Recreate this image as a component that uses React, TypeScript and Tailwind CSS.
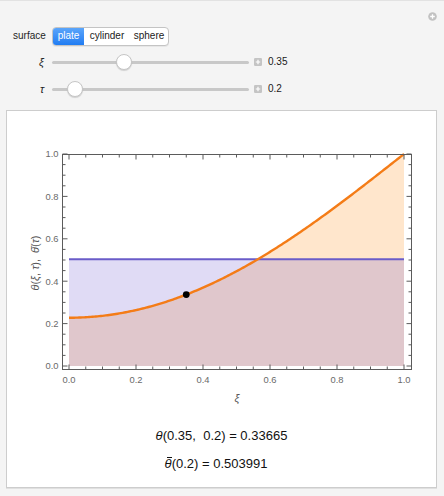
import React, { useMemo } from "react";

const X0 = 69;
const XS = 335;
const Y0 = 366;
const YS = 212;
const TAU = 0.2;
const XI = 0.35;

function theta(xi: number, tau: number) {
  let s = 0;
  for (let n = 0; n < 40; n++) {
    const l = (n + 0.5) * Math.PI;
    s += ((2 * (n % 2 ? -1 : 1)) / l) * Math.cos(l * xi) * Math.exp(-l * l * tau);
  }
  return 1 - s;
}
function meanTheta(tau: number) {
  let s = 0;
  for (let n = 0; n < 40; n++) {
    const l = (n + 0.5) * Math.PI;
    s += (2 / (l * l)) * Math.exp(-l * l * tau);
  }
  return 1 - s;
}
const px = (v: number) => X0 + v * XS;
const py = (v: number) => Y0 - v * YS;

function Plot() {
  const { curve, fillCurve, mean } = useMemo(() => {
    const pts: string[] = [];
    for (let i = 0; i <= 200; i++) {
      const xi = i / 200;
      pts.push(`${px(xi).toFixed(2)},${py(theta(xi, TAU)).toFixed(2)}`);
    }
    const m = meanTheta(TAU);
    return {
      curve: "M" + pts.join(" L"),
      fillCurve: "M" + px(0) + "," + Y0 + " L" + pts.join(" L") + " L" + px(1) + "," + Y0 + " Z",
      mean: m,
    };
  }, []);

  const ticks: { v: number; major: boolean }[] = [];
  for (let i = 0; i <= 20; i++) ticks.push({ v: i / 20, major: i % 4 === 0 });
  const frameL = 62.5, frameR = 411.5, frameT = 154.5, frameB = 369.5;
  const gray = "#5b5b5b";
  const my = py(mean);

  return (
    <svg width={429} height={300} viewBox="7 111 429 300" className="block">
      <path d={fillCurve} fill="#ff8000" fillOpacity={0.2} />
      <rect x={px(0)} y={my} width={XS} height={Y0 - my} fill="#664dcc" fillOpacity={0.2} />
      <line x1={px(0)} x2={px(1)} y1={my} y2={my} stroke="#6a5cc9" strokeWidth={2} />
      <path d={curve} fill="none" stroke="#f47c17" strokeWidth={2.4} />
      <circle cx={px(XI)} cy={py(theta(XI, TAU))} r={3.4} fill="#000" />
      <rect x={frameL} y={frameT} width={frameR - frameL} height={frameB - frameT} fill="none" stroke={gray} strokeWidth={1} />
      {ticks.map((t) => {
        const len = t.major ? 5 : 3;
        const x = px(t.v);
        const y = py(t.v);
        return (
          <g key={t.v} stroke={gray} strokeWidth={1}>
            <line x1={x} x2={x} y1={frameB} y2={frameB - len} />
            <line x1={x} x2={x} y1={frameT} y2={frameT + len} />
            <line x1={frameL} x2={frameL + len} y1={y} y2={y} />
            <line x1={frameR} x2={frameR - len} y1={y} y2={y} />
          </g>
        );
      })}
      <g fill="#6a6a6a" fontSize={9.4} fontFamily="'Liberation Sans', Arial, sans-serif">
        {[0, 0.2, 0.4, 0.6, 0.8, 1].map((v) => (
          <text key={"y" + v} x={58.5} y={py(v) + 3.3} textAnchor="end">
            {v.toFixed(1)}
          </text>
        ))}
        {[0, 0.2, 0.4, 0.6, 0.8, 1].map((v) => (
          <text key={"x" + v} x={px(v)} y={382.5} textAnchor="middle">
            {v.toFixed(1)}
          </text>
        ))}
      </g>
      <g fill="#555" fontSize={11} fontFamily="'Liberation Sans', Arial, sans-serif">
        <text x={237} y={402} textAnchor="middle" fontStyle="italic">
          ξ
        </text>
        <text transform="translate(39 263) rotate(-90)" textAnchor="middle">
          <tspan fontStyle="italic">θ</tspan>(<tspan fontStyle="italic">ξ</tspan>, <tspan fontStyle="italic">τ</tspan>),{"\u00a0 "}
          <tspan fontStyle="italic">{"θ\u0304"}</tspan>(<tspan fontStyle="italic">τ</tspan>)
        </text>
      </g>
    </svg>
  );
}

function PlusBox() {
  return (
    <svg width={8} height={8} viewBox="0 0 8 8" className="block">
      <rect x={0} y={0} width={8} height={8} rx={1.2} fill="#c4c4c4" />
      <path d="M4 1.8V6.2M1.8 4H6.2" stroke="#fff" strokeWidth={1.2} />
    </svg>
  );
}

function Slider({ label, thumb, value }: { label: string; thumb: string; value: string }) {
  return (
    <div className="flex items-center h-[20px]">
      <div className="w-[39px] pr-[8px] text-right text-[11px] italic text-[#222] leading-none">{label}</div>
      <div className="relative w-[197px] h-[20px] flex items-center">
        <div className="w-full h-[3px] rounded-full bg-[#c8c8c8]" />
        <div
          className={`absolute top-[2px] w-[16px] h-[16px] rounded-full bg-white border border-[#c6c6c6] shadow-[0_1px_1px_rgba(0,0,0,0.15)] ${thumb}`}
        />
      </div>
      <div className="ml-[5px]">
        <PlusBox />
      </div>
      <div className="ml-[6px] text-[10px] text-[#1a1a1a] leading-none">{value}</div>
    </div>
  );
}

export default function App() {
  return (
    <div className="relative w-[444px] h-[496px] bg-[#f4f4f4] border-t border-[#e2e2e2] overflow-hidden font-['Liberation_Sans',Arial,sans-serif]">
      <div className="absolute left-[428px] top-[11px]">
        <svg width={9} height={9} viewBox="0 0 9 9" className="block">
          <circle cx={4.5} cy={4.5} r={4.3} fill="#c2c2c2" />
          <path d="M4.5 2.2V6.8M2.2 4.5H6.8" stroke="#fff" strokeWidth={1.3} />
        </svg>
      </div>

      <div className="flex flex-col pt-[25px] pl-[13px]">
        <div className="flex items-center h-[20px]">
          <div className="w-[39px] text-[10px] text-[#1f1f1f] leading-none">surface</div>
          <div className="flex h-[19px] border border-[#c4c4c4] rounded-[4px] overflow-hidden bg-white text-[10px] leading-none shadow-[0_1px_0_rgba(0,0,0,0.05)]">
            <div className="w-[31px] flex items-center justify-center text-white bg-gradient-to-b from-[#5aa5fb] to-[#1f7cf2]">
              plate
            </div>
            <div className="w-[46px] flex items-center justify-center text-[#1a1a1a]">cylinder</div>
            <div className="w-[38px] flex items-center justify-center text-[#1a1a1a]">sphere</div>
          </div>
        </div>
        <div className="mt-[6px]">
          <Slider label="ξ" thumb="left-[64px]" value="0.35" />
        </div>
        <div className="mt-[7px]">
          <Slider label="τ" thumb="left-[15px]" value="0.2" />
        </div>
      </div>

      <div className="mt-[11px] ml-[6px] w-[431px] h-[378px] bg-white border border-[#cdcdcd] shadow-[0_1px_0_#e0e0e0] flex flex-col">
        <Plot />
        <div className="mt-[17px] flex justify-center text-[13px] leading-[16px] text-[#111]">
          <span>
            <span className="italic">θ</span>(0.35,{"\u00a0\u00a0"}0.2) = 0.33665
          </span>
        </div>
        <div className="mt-[12px] flex justify-center pr-[11px] text-[13px] leading-[16px] text-[#111]">
          <span>
            <span className="relative inline-block italic">
              θ
              <span className="absolute left-[2px] top-[1px] w-[5px] h-[1px] bg-[#111]" />
            </span>
            (0.2) = 0.503991
          </span>
        </div>
      </div>
    </div>
  );
}
